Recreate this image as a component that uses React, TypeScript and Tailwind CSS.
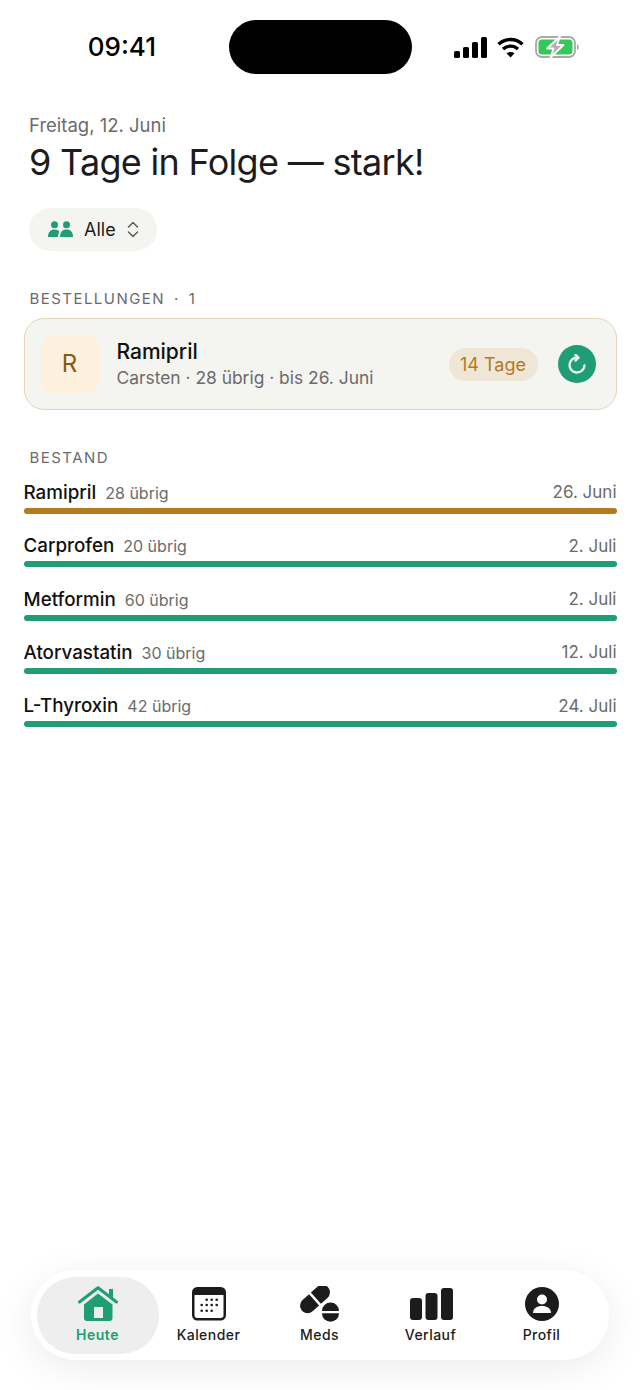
const stock = [
  { name: 'Ramipril', left: '28 übrig', until: '26. Juni', color: 'bg-[#b57a1e]' },
  { name: 'Carprofen', left: '20 übrig', until: '2. Juli', color: 'bg-[#1f9d74]' },
  { name: 'Metformin', left: '60 übrig', until: '2. Juli', color: 'bg-[#1f9d74]' },
  { name: 'Atorvastatin', left: '30 übrig', until: '12. Juli', color: 'bg-[#1f9d74]' },
  { name: 'L-Thyroxin', left: '42 übrig', until: '24. Juli', color: 'bg-[#1f9d74]' },
]

const calendarDots = [
  [14.7, 12.7], [19.7, 12.7], [24.7, 12.7],
  [9.7, 18], [14.7, 18], [19.7, 18], [24.7, 18],
  [9.7, 23.7], [14.7, 23.7], [19.7, 23.7],
]

function StatusBar() {
  return (
    <div className="flex h-[94px] shrink-0 items-start pt-[20px]">
      <div className="flex h-[54px] w-[229px] items-center justify-end pr-[73px] text-[26px] font-medium leading-none text-black">
        09:41
      </div>
      <div className="h-[54px] w-[183px] rounded-[27px] bg-black" />
      <div className="flex h-[54px] items-center gap-[10px] pl-[42px]">
        <svg width="33" height="21" viewBox="0 0 33 21" fill="#000">
          <rect x="0" y="14" width="6" height="7" rx="1.5" />
          <rect x="9" y="10" width="6" height="11" rx="1.5" />
          <rect x="18" y="5" width="6" height="16" rx="1.5" />
          <rect x="27" y="0" width="6" height="21" rx="1.5" />
        </svg>
        <svg width="27" height="21" viewBox="0 0 27 21" fill="none" stroke="#000" strokeWidth="3.4">
          <path d="M1.500 7.200C8.400 .9 18.600 .9 25.500 7.200" />
          <path d="M6 12c4.400-3.900 10.600-3.900 15 0" />
          <path d="M13.500 20.500l-4-4.300c2.400-1.700 5.600-1.700 8 0z" fill="#000" stroke="none" />
        </svg>
        <svg width="47" height="24" viewBox="0 0 47 24">
          <rect x="2" y="2" width="39" height="20" rx="6" fill="none" stroke="#a9a9a9" strokeWidth="1.800" />
          <rect x="4.500" y="4.500" width="34" height="15" rx="3.500" fill="#34c759" />
          <path d="M43 9c1.300.4 1.800 1.700 1.800 3s-.5 2.600-1.800 3z" fill="#a9a9a9" />
          <path d="M26 1.500L13 13.500h6.500l-3 9 13-12.500H23z" fill="#b0b0b0" stroke="#fff" strokeWidth="1.800" strokeLinejoin="round" />
        </svg>
      </div>
    </div>
  )
}

function NavItem({ label, active, children }: { label: string; active?: boolean; children: React.ReactNode }) {
  return (
    <div className={`flex h-[77px] flex-col items-center justify-center rounded-[38px] ${active ? '-mx-[5.5px] w-[122px] bg-[#eeeeee]' : 'w-[111px]'}`}>
      <div className="flex h-[36px] items-center justify-center">{children}</div>
      <span className={`mt-[4px] text-[14px] leading-[18px] ${active ? 'font-semibold tracking-[0.5px] text-[#1f9d74]' : 'font-[450] tracking-[0.45px] text-[#1c1c1e]'}`}>
        {label}
      </span>
    </div>
  )
}

export default function App() {
  return (
    <div className="flex h-[1390px] w-[640px] flex-col overflow-hidden bg-white font-['Inter',sans-serif] text-[#1c1c1e]">
      <StatusBar />

      <div className="pl-[29px] pt-[20px]">
        <p className="text-[18.500px] leading-[22px] text-[#6b6b6b]">Freitag, 12. Juni</p>
        <h1 className="mt-[4px] text-[36px] font-normal leading-[44px] tracking-[-0.7px] text-[#1c1c1e]">9 Tage in Folge — stark!</h1>
        <div className="mt-[24px] inline-flex h-[42.500px] w-[128px] items-center rounded-[22px] bg-[#f4f4f1] pl-[19px]">
          <svg width="25" height="16" viewBox="0 0 25 16" fill="#1f9d74" className="mr-[11px] shrink-0">
            <circle cx="6.500" cy="3.700" r="3.500" />
            <circle cx="18.500" cy="3.700" r="3.500" />
            <path d="M0 16c0-5 2.500-7.500 6.500-7.500 2.200 0 3.900.8 5 2.200-.9 1.300-1.400 3.100-1.500 5.300z" />
            <path d="M12 16c0-5 2.500-7.500 6.500-7.500S25 11 25 16z" />
          </svg>
          <span className="text-[18px] font-normal text-[#1c1c1e]">Alle</span>
          <svg width="12" height="17" viewBox="0 0 12 17" fill="none" stroke="#5c5c5c" strokeWidth="1.500" strokeLinecap="round" strokeLinejoin="round" className="ml-[11px]">
            <path d="M1.500 6L6 1.500 10.500 6" />
            <path d="M1.500 11L6 15.500 10.500 11" />
          </svg>
        </div>
      </div>

      <div className="mt-[38px] flex pl-[29.500px] text-[15px] font-normal leading-[20px] tracking-[1.450px] text-[#6b6b6b]">
        <span>BESTELLUNGEN</span>
        <span className="ml-[9px]">·</span>
        <span className="ml-[9px]">1</span>
      </div>

      <div className="mx-[23.500px] mt-[9.500px] flex h-[92px] items-center rounded-[20px] border border-[#e8d5b5] bg-[#f4f4f1] pl-[16px] pr-[20px]">
        <div className="flex h-[58px] w-[58px] items-center justify-center rounded-[14px] bg-[#fdf0dc] text-[24px] font-normal text-[#8a5a10]">
          R
        </div>
        <div className="ml-[18px] flex-1 pt-[1px]">
          <div className="text-[21px] font-[450] leading-[26px] text-[#111]">Ramipril</div>
          <div className="mt-[1px] text-[17.400px] leading-[24px] text-[#6b6b6b]">Carsten · 28 übrig · bis 26. Juni</div>
        </div>
        <div className="flex h-[33px] w-[89px] items-center justify-center rounded-full bg-[#efe6d6] text-[18px] font-normal text-[#b57a1e]">
          14 Tage
        </div>
        <div className="ml-[20px] flex h-[38px] w-[38px] items-center justify-center rounded-full bg-[#1f9d74]">
          <svg width="20" height="20" viewBox="0 0 20 20" fill="none" stroke="#fff" strokeWidth="2.400" strokeLinecap="round" strokeLinejoin="round" className="opacity-90">
            <path d="M17.500 11.500A7.500 7.500 0 1 1 10.500 3.500" />
            <path d="M8.500 .8l3 2.800-3 3" />
          </svg>
        </div>
      </div>

      <div className="mt-[37.500px] pl-[29.500px] text-[15px] font-normal leading-[20px] tracking-[1.450px] text-[#6b6b6b]">BESTAND</div>

      <div className="mx-[23.500px] mt-[10.500px] flex flex-col gap-[17.330px]">
        {stock.map(item => (
          <div key={item.name}>
            <div className="flex h-[30px] items-center">
              <span className="text-[18.800px] font-[450] text-[#111]">{item.name}</span>
              <span className="ml-[9px] text-[16px] text-[#6b6b6b]">{item.left}</span>
              <span className="ml-auto text-[17px] text-[#6b6b6b]">{item.until}</span>
            </div>
            <div className={`h-[6px] rounded-full ${item.color}`} />
          </div>
        ))}
      </div>

      <div className="mx-[31px] mb-[30px] mt-auto flex h-[90px] items-center rounded-[45px] bg-white pl-[11px] shadow-[0_8px_40px_rgba(0,0,0,0.08)]">
        <NavItem label="Heute" active>
          <svg width="40" height="36" viewBox="0 0 40 36" fill="#1f9d74">
            <path d="M1.500 16L20 1.700 38.500 16" fill="none" stroke="#1f9d74" strokeWidth="3" strokeLinecap="round" strokeLinejoin="round" />
            <rect x="31" y="3" width="4" height="9" />
            <path fillRule="evenodd" d="M6 18.500L20 7.500l14.500 11V32a3 3 0 0 1-3 3H9a3 3 0 0 1-3-3zM16 21v11h9V21z" />
          </svg>
        </NavItem>
        <NavItem label="Kalender">
          <svg width="34" height="34" viewBox="0 0 34 34">
            <rect x="1.250" y="1.250" width="31.500" height="31" rx="4" fill="#fff" stroke="#1c1c1e" strokeWidth="2.500" />
            <path d="M1.250 5.250a4 4 0 0 1 4-4h23.500a4 4 0 0 1 4 4V8h-31.500z" fill="#1c1c1e" />
            {calendarDots.map(([x, y]) => (
              <circle key={`${x}-${y}`} cx={x} cy={y} r="1.300" fill="#1c1c1e" />
            ))}
          </svg>
        </NavItem>
        <NavItem label="Meds">
          <svg width="40" height="36" viewBox="0 0 40 36" fill="#1c1c1e">
            <g transform="rotate(-42 15 13)">
              <path d="M-2.500 13A7.500 7.500 0 0 1 5 5.500H13.800V20.500H5A7.500 7.500 0 0 1-2.500 13z" />
              <path d="M16.200 5.500H25A7.500 7.500 0 0 1 25 20.500H16.200z" />
            </g>
            <path d="M23 25a8.500 8.500 0 0 1 17 0z" transform="translate(-1 0)" />
            <path d="M23 27.300a8.500 8.500 0 0 0 17 0z" transform="translate(-1 0)" />
          </svg>
        </NavItem>
        <NavItem label="Verlauf">
          <svg width="43" height="32" viewBox="0 0 43 32" fill="#1c1c1e" className="ml-[2px]">
            <rect x="0" y="10" width="12" height="22" rx="3" />
            <rect x="15.500" y="5" width="12" height="27" rx="3" />
            <rect x="31" y="0" width="12" height="32" rx="3" />
          </svg>
        </NavItem>
        <NavItem label="Profil">
          <svg width="34" height="34" viewBox="0 0 34 34">
            <circle cx="17" cy="17" r="17" fill="#1c1c1e" />
            <circle cx="17" cy="12.500" r="5" fill="#fff" />
            <path d="M8 26c0-4.500 4-7 9-7s9 2.500 9 7z" fill="#fff" />
          </svg>
        </NavItem>
      </div>
    </div>
  )
}
